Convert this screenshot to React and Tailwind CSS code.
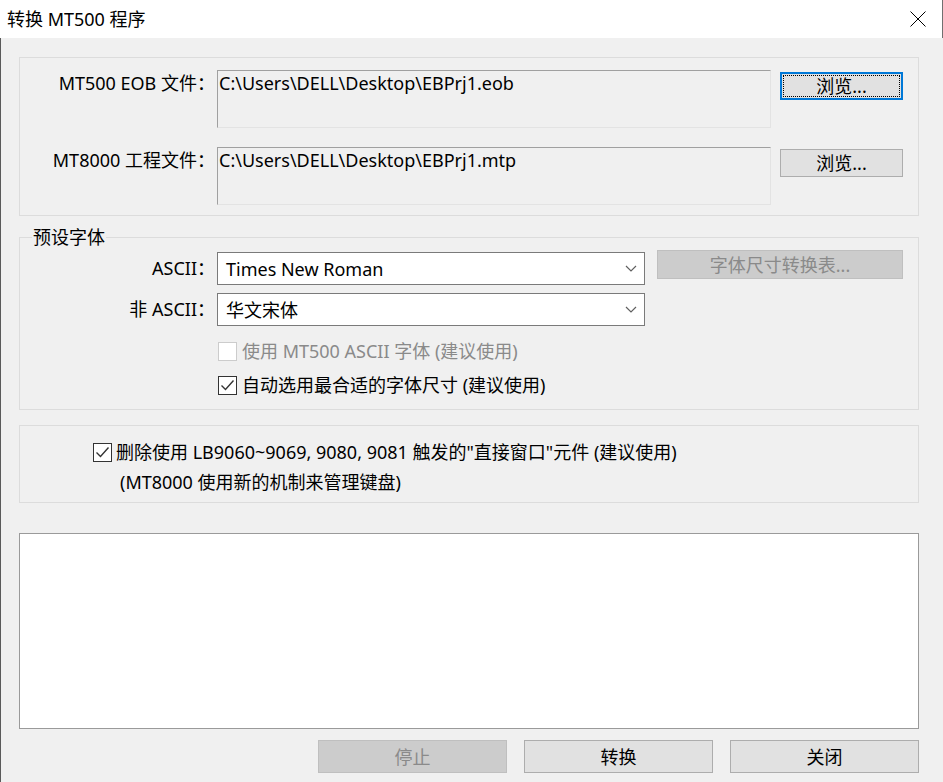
import React from "react";

const font = "font-['Noto_Sans','Noto_Sans_CJK_SC',sans-serif]";

function CheckBox({ checked, disabled }) {
  return (
    <svg width="19" height="19" viewBox="0 0 19 19" className="shrink-0">
      <rect
        x="0.5"
        y="0.5"
        width="18"
        height="18"
        fill="#ffffff"
        stroke={disabled ? "#cccccc" : "#333333"}
      />
      {checked && (
        <path
          d="M3.5 9.5 L7.5 13.5 L15.5 4.5"
          fill="none"
          stroke="#333333"
          strokeWidth="1.4"
        />
      )}
    </svg>
  );
}

function Chevron() {
  return (
    <svg width="12" height="7" viewBox="0 0 12 7">
      <path d="M1 1 L6 6 L11 1" fill="none" stroke="#606060" strokeWidth="1.2" />
    </svg>
  );
}

function FileRow({ label, path, focused }) {
  return (
    <div className="flex items-start">
      <div className="w-[195px] mt-[2px] text-right leading-[22px] whitespace-nowrap">
        {label}
      </div>
      <div className="ml-[2px] w-[554px] h-[58px] border border-t-[#a0a0a0] border-l-[#a0a0a0] border-r-[#e3e3e3] border-b-[#e3e3e3] bg-[#f0f0f0] pl-px leading-[22px] pt-px">
        {path}
      </div>
      {focused ? (
        <button className="ml-[9px] mt-[2px] w-[123px] h-[28px] border-2 border-[#0078d7] bg-[#e1e1e1] p-px">
          <div className="h-full border border-dotted border-black flex items-center justify-center leading-[22px]">
            浏览...
          </div>
        </button>
      ) : (
        <button className="ml-[9px] mt-[2px] w-[123px] h-[28px] border border-[#adadad] bg-[#e1e1e1] flex items-center justify-center leading-[22px]">
          浏览...
        </button>
      )}
    </div>
  );
}

function Combo({ label, value, children }) {
  return (
    <div className="flex items-start">
      <div className="w-[195px] mt-[5px] text-right leading-[22px] whitespace-nowrap">
        {label}
      </div>
      <div className="ml-[2px] w-[428px] h-[33px] border border-[#7a7a7a] bg-white flex items-center justify-between pl-[8px] pr-[7px]">
        <span className="leading-[22px]">{value}</span>
        <Chevron />
      </div>
      {children}
    </div>
  );
}

export default function App() {
  return (
    <div className={`w-[943px] h-[782px] flex flex-col text-[18px] text-black ${font}`}>
      {/* Title bar */}
      <div className="h-[38px] bg-white flex items-center justify-between pl-[7px] pr-[16px] border-r border-[#707070]">
        <span className="leading-[22px]">转换 MT500 程序</span>
        <svg width="16" height="16" viewBox="0 0 16 16">
          <path d="M0.5 0.5 L15.5 15.5 M15.5 0.5 L0.5 15.5" stroke="#000000" strokeWidth="1" />
        </svg>
      </div>

      {/* Body */}
      <div className="flex-1 bg-[#f0f0f0] border-l border-[#5a5a5a] pl-[18px] pr-[24px] pt-[19px] flex flex-col">
        {/* Files group */}
        <div className="border border-[#dcdcdc] pt-[12px] pb-[10px] flex flex-col gap-[19px]">
          <FileRow
            label="MT500 EOB 文件："
            path="C:\Users\DELL\Desktop\EBPrj1.eob"
            focused
          />
          <FileRow
            label="MT8000 工程文件："
            path="C:\Users\DELL\Desktop\EBPrj1.mtp"
          />
        </div>

        {/* Font group */}
        <div className="relative mt-[21px] border border-[#dcdcdc] pt-[14px] pb-[13px] flex flex-col">
          <span className="absolute left-[12px] -top-[12px] px-[1px] bg-[#f0f0f0] leading-[22px]">
            预设字体
          </span>
          <Combo label="ASCII：" value="Times New Roman">
            <button className="ml-[12px] -mt-[2px] w-[246px] h-[29px] border border-[#bfbfbf] bg-[#cccccc] text-[#8a8a8a] flex items-center justify-center leading-[22px]">
              字体尺寸转换表...
            </button>
          </Combo>
          <div className="mt-[8px]">
            <Combo label="非 ASCII：" value="华文宋体" />
          </div>
          <div className="mt-[14px] ml-[198px] flex items-center gap-[5px] text-[#8a8a8a]">
            <CheckBox disabled />
            <span className="leading-[22px]">使用 MT500 ASCII 字体 (建议使用)</span>
          </div>
          <div className="mt-[12px] ml-[198px] flex items-center gap-[5px]">
            <CheckBox checked />
            <span className="leading-[22px]">自动选用最合适的字体尺寸 (建议使用)</span>
          </div>
        </div>

        {/* Keyboard group */}
        <div className="mt-[15px] border border-[#dcdcdc] pt-[15px] pb-[9px] flex flex-col">
          <div className="ml-[73px] flex items-center gap-[4px]">
            <CheckBox checked />
            <span className="leading-[22px]">
              删除使用 LB9060~9069, 9080, 9081 触发的"直接窗口"元件 (建议使用)
            </span>
          </div>
          <div className="mt-[8px] ml-[100px] leading-[22px]">
            (MT8000 使用新的机制来管理键盘)
          </div>
        </div>

        {/* Log area */}
        <div className="mt-[30px] h-[196px] border border-[#9a9a9a] bg-white" />

        {/* Buttons */}
        <div className="mt-[11px] flex justify-end gap-[17px]">
          <button className="w-[189px] h-[33px] border border-[#bfbfbf] bg-[#cccccc] text-[#8a8a8a] flex items-center justify-center leading-[22px]">
            停止
          </button>
          <button className="w-[189px] h-[33px] border border-[#adadad] bg-[#e1e1e1] flex items-center justify-center leading-[22px]">
            转换
          </button>
          <button className="w-[189px] h-[33px] border border-[#adadad] bg-[#e1e1e1] flex items-center justify-center leading-[22px]">
            关闭
          </button>
        </div>
      </div>
    </div>
  );
}
